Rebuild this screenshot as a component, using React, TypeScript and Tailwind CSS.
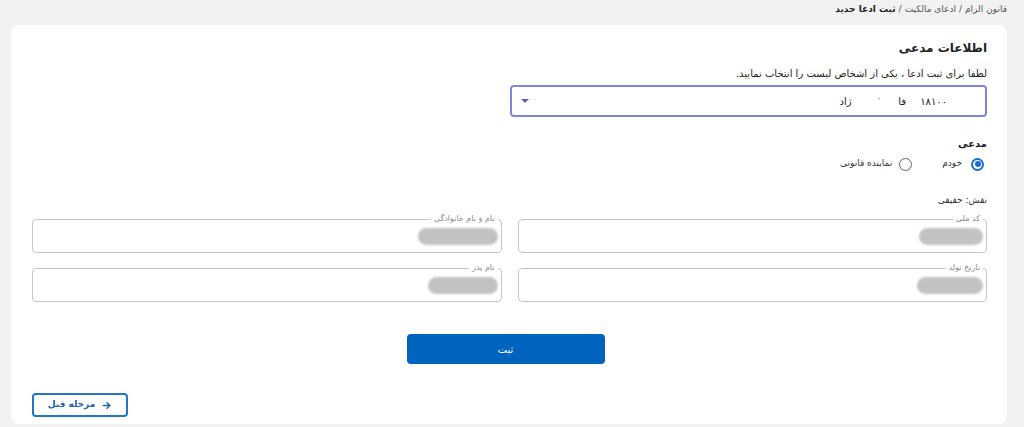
import React from "react";

const font = { fontFamily: '"DejaVu Sans", "Noto Sans", sans-serif' };

function Blob({ w }: { w: number }) {
  return (
    <div
      className="h-[17px] rounded-full bg-[#c2c2c2] blur-[1px]"
      style={{ width: w }}
    />
  );
}

function Field({ label, blob }: { label: string; blob: number }) {
  return (
    <fieldset className="flex-1 h-[39px] border border-[#c6c6c6] rounded-[4px] px-[3px] pb-0 m-0 min-w-0">
      <legend className="px-[3px] text-[8px] leading-[10px] text-[#8a8a8a]">{label}</legend>
      <div className="flex justify-start pt-[4px]">
        <Blob w={blob} />
      </div>
    </fieldset>
  );
}

export default function App() {
  return (
    <div dir="rtl" style={font} className="w-[1024px] h-[427px] bg-[#f2f2f2] pl-[11px] pr-[17px] overflow-hidden">
      <div className="h-[25px] flex items-center pb-[6px] text-[9px] text-[#555]">
        <span>قانون الزام</span>
        <span className="mx-[3px]">/</span>
        <span>ادعای مالکیت</span>
        <span className="mx-[3px]">/</span>
        <span className="font-bold text-[#222]">ثبت ادعا جدید</span>
      </div>
      <div className="bg-white rounded-[8px] h-[399px] pr-[20px] pl-[21px] pt-[13px] flex flex-col">
        <div className="text-[12px] leading-[20px] font-bold text-[#222]">اطلاعات مدعی</div>
        <div className="text-[10px] leading-[14px] mt-[9px] text-[#222]">
          لطفا برای ثبت ادعا ، یکی از اشخاص لیست را انتخاب نمایید.
        </div>
        <div className="mt-[4px] w-[477px] h-[32px] border-2 border-[#7f86d8] rounded-[4px] flex items-center pr-[38px] pl-[9px] text-[10px] text-[#222]">
          <span>۱۸۱۰۰</span>
          <span className="mr-[14px]">فا</span>
          <span className="mr-[18px] text-[#aaa]">'</span>
          <span className="mr-[26px]">ژاد</span>
          <span className="mr-auto w-0 h-0 border-l-[4px] border-r-[4px] border-t-[4px] border-l-transparent border-r-transparent border-t-[#5a62b8]" />
        </div>
        <div className="mt-[20px] text-[10px] leading-[14px] font-bold text-[#222]">مدعی</div>
        <div className="mt-[6px] flex items-center text-[9px] text-[#333] h-[14px]">
          <span className="w-[13px] h-[13px] rounded-full border-2 border-[#1b6fd0] flex items-center justify-center mr-[3px]">
            <span className="w-[6px] h-[6px] rounded-full bg-[#1b6fd0]" />
          </span>
          <span className="mr-[9px]">خودم</span>
          <span className="w-[13px] h-[13px] rounded-full border-[1.5px] border-[#666] mr-[30px]" />
          <span className="mr-[7px]">نماینده قانونی</span>
        </div>
        <div className="mt-[22px] text-[9px] leading-[14px] text-[#333]">نقش: حقیقی</div>
        <div className="mt-[7px] flex gap-[16px]">
          <Field label="کد ملی" blob={64} />
          <Field label="نام و نام خانوادگی" blob={80} />
        </div>
        <div className="mt-[10px] flex gap-[16px]">
          <Field label="تاریخ تولد" blob={66} />
          <Field label="نام پدر" blob={70} />
        </div>
        <div className="mt-[32px] flex justify-center">
          <button className="w-[198px] h-[30px] rounded-[4px] bg-[#0063be] text-white text-[10px] mr-[8px]">
            ثبت
          </button>
        </div>
        <div className="mt-[29px] flex justify-end">
          <button className="w-[96px] h-[24px] rounded-[4px] border-2 border-[#2474cc] text-[#1f5fa8] text-[9px] font-bold flex items-center justify-center gap-[6px]">
            <svg width="11" height="11" viewBox="0 0 24 24" fill="none" stroke="#1f5fa8" strokeWidth="3" strokeLinecap="round" strokeLinejoin="round">
              <path d="M5 12h14" />
              <path d="M13 6l6 6-6 6" />
            </svg>
            <span>مرحله قبل</span>
          </button>
        </div>
      </div>
    </div>
  );
}
